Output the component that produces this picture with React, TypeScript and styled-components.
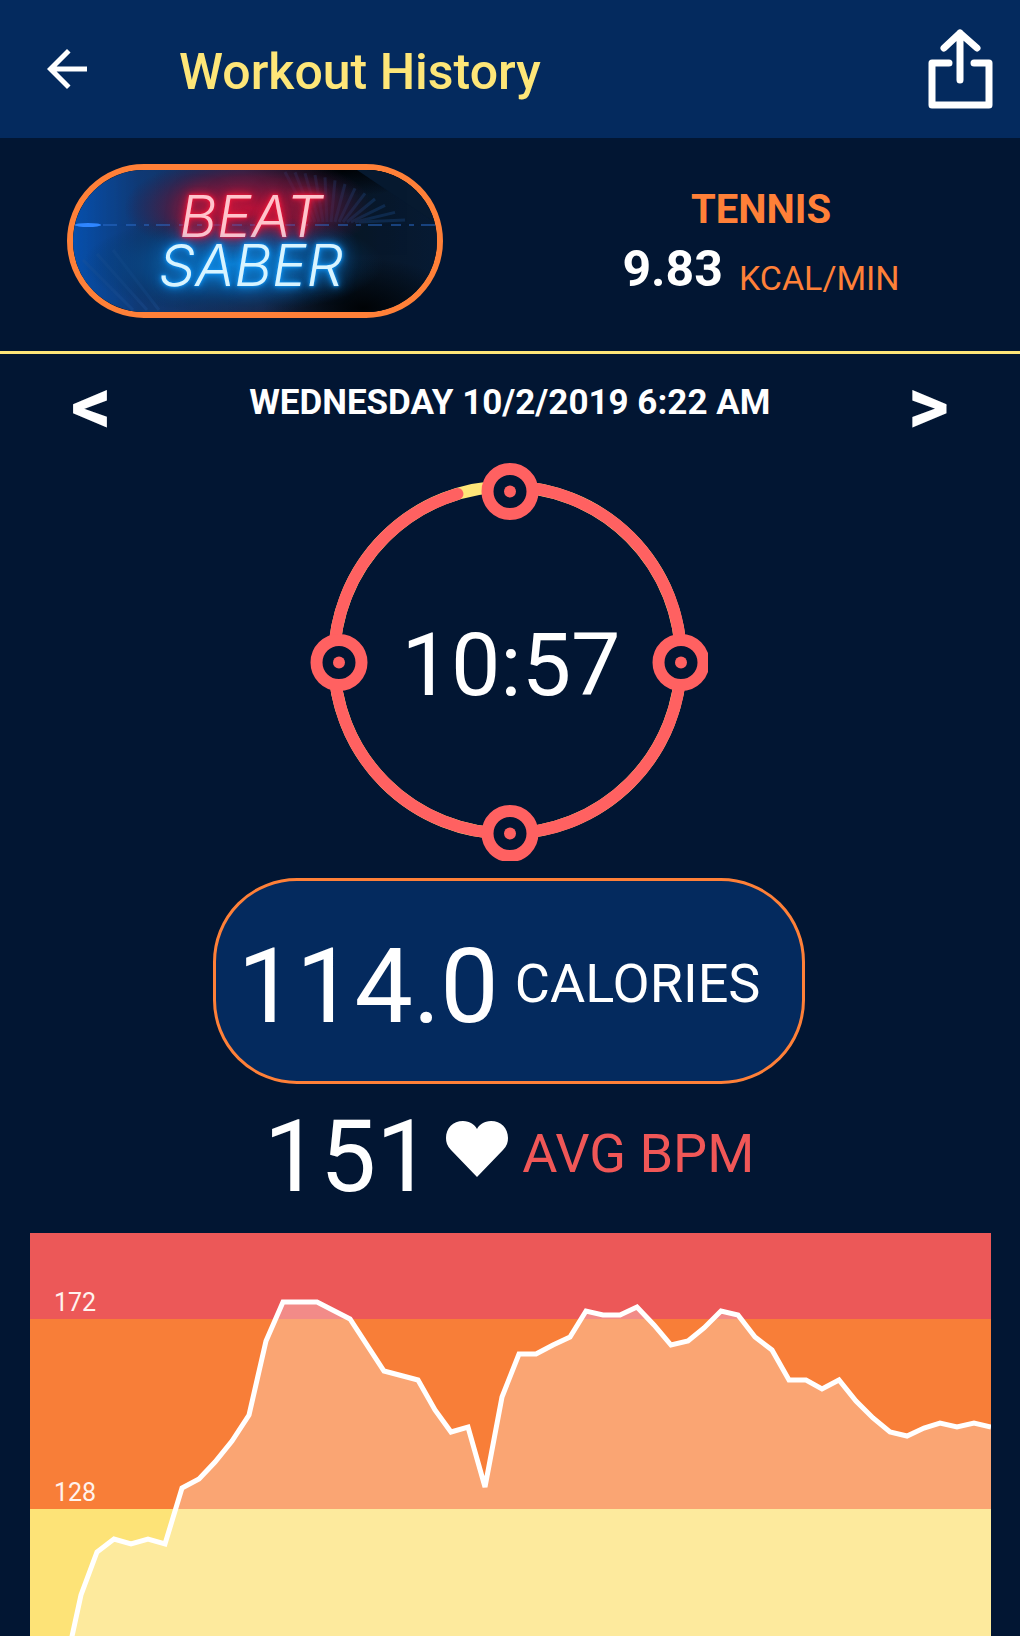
import React from "react";
import styled, { createGlobalStyle } from "styled-components";

const color = {
  night: "#021633",
  navy: "#042a5e",
  yellow: "#fee678",
  orange: "#ff8038",
  coral: "#ff6161",
  red: "#f05757",
  white: "#ffffff",
};

const GlobalStyle = createGlobalStyle`
  * { box-sizing: border-box; }
  body {
    margin: 0;
    background: ${color.night};
    color: ${color.white};
    font-family: Roboto, "Liberation Sans", sans-serif;
  }
`;

const Screen = styled.div`
  display: flex;
  flex-direction: column;
  min-height: 100vh;
`;

const Header = styled.header`
  display: flex;
  align-items: center;
  height: 138px;
  padding: 0 25px 0 37px;
  background: ${color.navy};
`;

const IconButton = styled.button`
  display: flex;
  padding: 0;
  border: 0;
  background: none;
  color: ${color.white};
  cursor: pointer;
`;

const Title = styled.h1`
  flex: 1;
  margin: 6px 0 0 82px;
  font-size: 50px;
  line-height: 60px;
  font-weight: 500;
  color: ${color.yellow};
`;

const Summary = styled.section`
  display: grid;
  grid-template-columns: 1fr 1fr;
  justify-items: center;
  padding: 26px 0 33px;
  border-bottom: 3px solid ${color.yellow};
`;

const GameBadge = styled.div`
  display: grid;
  width: 376px;
  height: 154px;
  overflow: hidden;
  border: 6px solid ${color.orange};
  border-radius: 77px;
  background: #03101f;

  & > * { grid-area: 1 / 1; }
`;

const Backdrop = styled.svg`
  width: 100%;
  height: 100%;
`;

const Logo = styled.div`
  z-index: 1;
  padding: 22px 8px 0 0;
  text-align: center;
  font-family: Inter, "Open Sans", sans-serif;
  font-size: 58px;
  font-style: italic;
  font-weight: 300;
  line-height: 49px;
`;

const Neon = styled.div<{ $core: string; $glow: string }>`
  color: ${(p) => p.$core};
  text-shadow: 0 0 2px ${(p) => p.$glow}, 0 0 4px ${(p) => p.$glow}, 0 0 8px ${(p) => p.$glow}, 0 0 18px ${(p) => p.$glow};
`;

const Stats = styled.div`
  display: flex;
  flex-direction: column;
  align-items: center;
  padding: 22px 8px 0 0;
`;

const Activity = styled.h2`
  margin: 0;
  font-size: 40px;
  line-height: 48px;
  font-weight: 700;
  color: ${color.orange};
`;

const Rate = styled.div`
  display: flex;
  align-items: flex-end;
  gap: 16px;
`;

const RateValue = styled.strong`
  font-size: 50px;
  line-height: 70px;
`;

const RateUnit = styled.span`
  font-size: 34px;
  line-height: 52px;
  color: ${color.orange};
`;

const DateNav = styled.nav`
  display: flex;
  align-items: flex-start;
  justify-content: space-between;
  height: 109px;
  padding: 24px 71px 0;
`;

const StepButton = styled.button`
  padding: 0;
  border: 0;
  background: none;
  color: ${color.white};
  font-family: inherit;
  font-size: 80px;
  font-weight: 700;
  line-height: 56px;
  cursor: pointer;
`;

const DateText = styled.time`
  font-size: 35px;
  line-height: 50px;
  font-weight: 700;
`;

const Results = styled.div`
  display: flex;
  flex-direction: column;
  align-items: center;
  padding-right: 2px;
`;

const Dial = styled.div`
  display: grid;
  place-items: center;

  & > * { grid-area: 1 / 1; }
`;

const Duration = styled.time`
  padding: 6px 0 0 4px;
  font-size: 88px;
  line-height: 100px;
`;

const Calories = styled.section`
  display: flex;
  align-items: center;
  gap: 16px;
  height: 206px;
  margin-top: 17px;
  padding: 6px 42px 0 22px;
  border: 3px solid ${color.orange};
  border-radius: 84px;
  background: ${color.navy};
`;

const HeartRate = styled.section`
  display: flex;
  align-items: center;
  height: 149px;
  padding-bottom: 10px;
`;

const Figure = styled.span<{ $size: number }>`
  padding-top: 6px;
  font-size: ${(p) => p.$size}px;
  line-height: 1;
`;

const Unit = styled.span<{ $color: string }>`
  font-size: 54px;
  line-height: 60px;
  color: ${(p) => p.$color};
`;

const Heart = styled.svg`
  margin: 0 14px 10px;
`;

const Chart = styled.section`
  position: relative;
  display: grid;
  grid-template-rows: 86px 190px 127px;
  margin: 0 29px 0 30px;
`;

const Zone = styled.div<{ $fill: string }>`
  display: flex;
  align-items: flex-end;
  padding: 0 24px 1px;
  background: ${(p) => p.$fill};
  font-size: 25px;
  line-height: 30px;
  color: #fff3ee;
`;

const Trace = styled.svg`
  position: absolute;
  inset: 0;
  width: 100%;
  height: 100%;
`;

/* Samples as [time slot, height below the top of the chart]. */
const samples: [number, number][] = [
  [2, 440], [3, 362], [4, 319], [5, 306], [6, 311], [7, 306], [8, 311], [9, 255],
  [10, 246], [11, 229], [12, 208], [13, 182], [14, 108], [15, 69], [17, 69],
  [19, 86], [21, 138], [23, 147], [24, 177], [25, 199], [26, 194], [27, 254],
  [28, 164], [29, 121], [30, 121], [31, 112], [32, 104], [33, 78], [34, 82],
  [35, 82], [36, 74], [37, 92], [38, 112], [39, 108], [40, 95], [41, 78],
  [42, 82], [43, 104], [44, 117], [45, 147], [46, 147], [47, 156], [48, 147],
  [49, 168], [50, 185], [51, 199], [52, 203], [53, 195], [54, 190], [55, 194],
  [56, 190], [57, 194],
];

const line = samples.map(([t, y]) => `${Math.round((t * 961) / 57)},${y}`).join(" ");

function BackIcon() {
  return (
    <svg width="60" height="60" viewBox="0 0 24 24" fill="currentColor" aria-hidden="true">
      <path d="M20 11H7.83l5.59-5.59L12 4l-8 8 8 8 1.41-1.41L7.83 13H20v-2z" />
    </svg>
  );
}

function ShareIcon() {
  return (
    <svg width="70" height="84" viewBox="0 0 70 84" fill="none" stroke="currentColor" strokeWidth="7" strokeLinecap="round" strokeLinejoin="round" aria-hidden="true">
      <path d="M35 53V6M19 21L35 6l17 15M24 36H7v42h57V36H49" />
    </svg>
  );
}

function BadgeBackdrop() {
  const rays = Array.from({ length: 13 }, (_, i) => i);
  return (
    <Backdrop viewBox="0 0 364 142" preserveAspectRatio="none" aria-hidden="true">
      <defs>
        <linearGradient id="base" x1="0" x2="1">
          <stop offset="0" stopColor="#0750ad" />
          <stop offset=".18" stopColor="#103a75" />
          <stop offset=".5" stopColor="#182a50" />
          <stop offset=".78" stopColor="#081728" />
          <stop offset="1" stopColor="#061a33" />
        </linearGradient>
        <radialGradient id="redHaze">
          <stop offset="0" stopColor="#c01038" stopOpacity=".9" />
          <stop offset=".6" stopColor="#6c1435" stopOpacity=".65" />
          <stop offset="1" stopColor="#3a1230" stopOpacity="0" />
        </radialGradient>
        <radialGradient id="blueHaze">
          <stop offset="0" stopColor="#0a80d4" stopOpacity=".9" />
          <stop offset=".6" stopColor="#064a88" stopOpacity=".6" />
          <stop offset="1" stopColor="#033058" stopOpacity="0" />
        </radialGradient>
        <radialGradient id="shade">
          <stop offset="0" stopColor="#000306" />
          <stop offset="1" stopColor="#000306" stopOpacity="0" />
        </radialGradient>
      </defs>
      <rect width="364" height="142" fill="url(#base)" />
      <ellipse cx="290" cy="138" rx="100" ry="50" fill="url(#shade)" />
      <ellipse cx="270" cy="0" rx="100" ry="26" fill="url(#shade)" />
      <path d="M284 0l80 54V0z" fill="#071a30" />
      <g stroke="#1f5598" strokeWidth="3" opacity=".3">
        {rays.map((i) => (
          <path key={i} d={`M${212 + i * 10} ${2 + i * i / 3}L${238 + i * 4} 52`} />
        ))}
        <path d="M10 90l50 50M24 84l50 56M40 80l46 60" />
      </g>
      <ellipse cx="176" cy="38" rx="125" ry="52" fill="url(#redHaze)" />
      <ellipse cx="160" cy="94" rx="150" ry="50" fill="url(#blueHaze)" />
      <path d="M0 55H364" stroke="#2a6ccc" strokeWidth="2" strokeDasharray="10 8 5 7 14 9" opacity=".5" />
      <ellipse cx="15" cy="55" rx="13" ry="2" fill="#2f86ff" />
    </Backdrop>
  );
}

function DialRing() {
  const nodes = [[200, 28.5], [371, 199.5], [200, 370.5], [29, 199.5]];
  return (
    <svg width="398" height="398" viewBox="0 0 398 398" fill="none" aria-hidden="true">
      <circle cx="197.5" cy="197" r="173.5" stroke={color.yellow} strokeWidth="12" />
      <path d="M197.5 23.5A173.5 173.5 0 1 1 147.4 30.9" stroke={color.coral} strokeWidth="12" strokeLinecap="round" />
      {nodes.map(([x, y]) => (
        <g key={`${x}-${y}`}>
          <circle cx={x} cy={y} r="22.5" fill={color.night} stroke={color.coral} strokeWidth="12" />
          <circle cx={x} cy={y} r="6" fill={color.coral} />
        </g>
      ))}
    </svg>
  );
}

export default function App() {
  return (
    <Screen>
      <GlobalStyle />
      <Header>
        <IconButton aria-label="Back"><BackIcon /></IconButton>
        <Title>Workout History</Title>
        <IconButton aria-label="Share"><ShareIcon /></IconButton>
      </Header>
      <Summary>
        <GameBadge>
          <BadgeBackdrop />
          <Logo>
            <Neon $core="#ffc4cc" $glow="#f0183c">BEAT</Neon>
            <Neon $core="#d8f4ff" $glow="#1292f0">SABER</Neon>
          </Logo>
        </GameBadge>
        <Stats>
          <Activity>TENNIS</Activity>
          <Rate>
            <RateValue>9.83</RateValue>
            <RateUnit>KCAL/MIN</RateUnit>
          </Rate>
        </Stats>
      </Summary>
      <DateNav>
        <StepButton aria-label="Previous workout">&lt;</StepButton>
        <DateText dateTime="2019-10-02T06:22">WEDNESDAY 10/2/2019 6:22 AM</DateText>
        <StepButton aria-label="Next workout">&gt;</StepButton>
      </DateNav>
      <Results>
        <Dial>
          <DialRing />
          <Duration>10:57</Duration>
        </Dial>
        <Calories>
          <Figure $size={104}>114.0</Figure>
          <Unit $color={color.white}>CALORIES</Unit>
        </Calories>
        <HeartRate>
          <Figure $size={100}>151</Figure>
          <Heart width="62" height="56" viewBox="0 0 62 56" fill="currentColor" aria-hidden="true">
            <path d="M31 56L5 29C1 25 0 21 0 17C0 7 7 0 17 0C24 0 29 4 31 8C33 4 38 0 45 0C55 0 62 7 62 17C62 21 61 25 57 29Z" />
          </Heart>
          <Unit $color={color.red}>AVG BPM</Unit>
        </HeartRate>
      </Results>
      <Chart aria-label="Heart rate over time">
        <Zone $fill="#ec5858">172</Zone>
        <Zone $fill="#f87e38">128</Zone>
        <Zone $fill="#fde377" />
        <Trace viewBox="0 0 961 403" preserveAspectRatio="none" aria-hidden="true">
          <polygon points={`34,440 ${line} 961,440`} fill="#fffaf0" fillOpacity=".32" />
          <polyline points={line} fill="none" stroke="#ffffff" strokeWidth="5" vectorEffect="non-scaling-stroke" />
        </Trace>
      </Chart>
    </Screen>
  );
}
